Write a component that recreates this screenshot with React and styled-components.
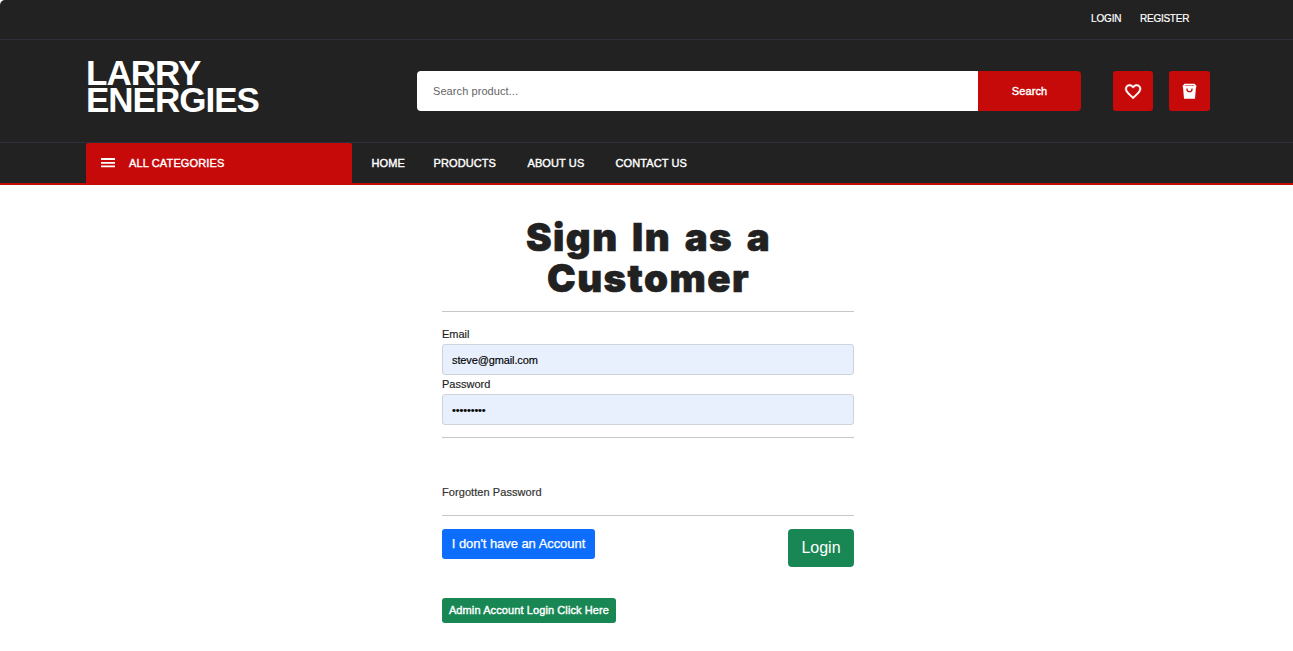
import React from 'react';
import styled, { createGlobalStyle, css } from 'styled-components';

const Global = createGlobalStyle`
  *, *::before, *::after { box-sizing: border-box; }
  body { margin: 0; background: #fff; color: #212121; font: 11px/16px "Liberation Sans", Arial, sans-serif; overflow: hidden; }
  a { color: inherit; text-decoration: none; }
  button, input { font: inherit; margin: 0; }
`;
const medium = css`
  font-weight: 400;
  -webkit-text-stroke: 0.4px currentColor;
`;
const Header = styled.header`
  background: #222;
  border-bottom: 2px solid #c60a0a;
  border-top-left-radius: 5px;
  color: #fff;
`;
const TopBar = styled.div`
  height: 40px;
  display: flex;
  justify-content: flex-end;
  gap: 19px;
  padding: 11px 103px 0 0;
  border-bottom: 1px solid #2f2e39;
  font-size: 10px;
  -webkit-text-stroke: 0.2px currentColor;
`;
const TopLink = styled.a`
  width: ${p => p.$w}px;
  white-space: nowrap;
  letter-spacing: ${p => p.$ls || 0}px;
`;
const MainBar = styled.div`
  height: 103px;
  display: flex;
  align-items: flex-start;
  padding: 0 83px 0 86px;
  border-bottom: 1px solid #2f2e39;
`;
const Logo = styled.h1`
  margin: 19px 0 0;
  width: 331px;
  font-size: 35px;
  line-height: 27px;
  font-weight: 700;
  letter-spacing: -1px;
`;
const SearchForm = styled.form`
  margin-top: 31px;
  display: flex;
  width: 664px;
  height: 40px;
  border-radius: 4px;
  overflow: hidden;
`;
const SearchInput = styled.input`
  flex: 1;
  min-width: 0;
  border: 0;
  padding: 0 16px;
  background: #fff;
  letter-spacing: 0.08px;
  &::placeholder { color: #646464; opacity: 1; }
`;
const SearchButton = styled.button`
  width: 103px;
  border: 0;
  background: #c60a0a;
  color: #fff;
  padding: 0;
  letter-spacing: 0.1px;
  ${medium}
`;
const IconButton = styled.button`
  margin: 31px 0 0 ${p => p.$gap}px;
  width: ${p => p.$w}px;
  height: 40px;
  border: 0;
  border-radius: 3px;
  padding: 0;
  background: #c60a0a;
  color: #fff;
  display: flex;
  align-items: center;
  justify-content: center;
`;
const NavBar = styled.nav`
  height: 40px;
  display: flex;
  padding-left: 86px;
  ${medium}
`;
const Categories = styled.div`
  width: 266px;
  display: flex;
  align-items: center;
  gap: 14px;
  padding-left: 15px;
  background: #c60a0a;
  border-radius: 2px 2px 0 0;
  letter-spacing: 0.14px;
`;
const NavLinks = styled.div`
  display: flex;
  align-items: center;
  padding-left: 19.5px;
  letter-spacing: 0.1px;
`;
const NavLink = styled.a`
  width: ${p => p.$w}px;
  white-space: nowrap;
`;
const Panel = styled.main`
  width: 412px;
  margin-left: 442px;
  padding-top: 32px;
`;
const Title = styled.h2`
  margin: 0;
  padding-left: 1px;
  font: 900 38.5px/41px Inter, "Liberation Sans", sans-serif;
  text-align: center;
  letter-spacing: 1.4px;
  word-spacing: 4.5px;
  -webkit-text-stroke: 0.6px currentColor;
`;
const Rule = styled.hr`
  margin: ${p => p.$top}px 0 0;
  border: 0;
  height: 1px;
  background: #c7c7c7;
`;
const Label = styled.label`
  display: block;
  height: 16px;
  margin-top: ${p => p.$top}px;
  -webkit-text-stroke: 0.15px currentColor;
`;
const Field = styled.input`
  display: block;
  width: 100%;
  height: 31px;
  margin-top: 2px;
  padding: 0 9px;
  border: 1px solid #ced4da;
  border-radius: 3px;
  background: #e8f0fe;
  color: #000;
  letter-spacing: -0.12px;
  -webkit-text-stroke: 0.15px currentColor;
`;
const Forgot = styled.a`
  display: block;
  margin-top: 46px;
  color: #333;
  letter-spacing: 0.07px;
  -webkit-text-stroke: 0.2px currentColor;
`;
const Actions = styled.div`
  display: flex;
  justify-content: space-between;
  align-items: flex-start;
  margin-top: 13px;
`;
const Button = styled.button`
  width: ${p => p.$w}px;
  height: ${p => p.$h}px;
  padding: 0;
  border: 0;
  border-radius: ${p => p.$r || 3}px;
  background: ${p => p.$bg};
  color: #fff;
  font-size: ${p => p.$size}px;
  letter-spacing: ${p => p.$ls || 0}px;
  white-space: nowrap;
  -webkit-text-stroke: ${p => p.$stroke || 0}px currentColor;
`;
const AdminButton = styled(Button)`
  padding-bottom: 1px;
`;
const AdminRow = styled.div`
  margin-top: 31px;
  display: flex;
`;

const MenuIcon = () => (
  <svg width="14" height="10" viewBox="0 0 14 10" fill="#fff">
    <path d="M0 0h14v2H0zM0 4h14v1.8H0zM0 7.4h14v1.8H0z" />
  </svg>
);
const HeartIcon = () => (
  <svg width="19" height="19" viewBox="0.5 0 24 24" fill="currentColor">
    <path d="M16.5 3c-1.74 0-3.41.81-4.5 2.09C10.91 3.81 9.24 3 7.5 3 4.42 3 2 5.42 2 8.5c0 3.78 3.4 6.86 8.55 11.54L12 21.35l1.45-1.32C18.6 15.36 22 12.28 22 8.5 22 5.42 19.58 3 16.5 3zm-4.4 15.55-.1.1-.1-.1C7.14 14.24 4 11.39 4 8.5 4 6.5 5.5 5 7.5 5c1.54 0 3.04.99 3.57 2.36h1.87C13.46 5.99 14.96 5 16.5 5c2 0 3.5 1.5 3.5 3.5 0 2.89-3.14 5.74-7.9 10.05z" stroke="currentColor" strokeWidth=".6" />
  </svg>
);
const BagIcon = () => (
  <svg width="15" height="16" viewBox="0 0 15 16">
    <path d="M2.5 .7h10l2 2.3-.6 2-.9 10.7H2L1.1 5 .5 3z" fill="#fff" />
    <path d="M3.2 1.9h8.6l.8 1.1H2.4z" fill="#e08080" />
    <path d="M5 5.6v.6a2.5 2.5 0 0 0 5 0v-.6" fill="none" stroke="#c60a0a" strokeWidth="1.3" />
  </svg>
);

export default function App() {
  return (
    <>
      <Global />
      <Header>
        <TopBar>
          <TopLink href="#" $w={30} $ls={-0.15}>LOGIN</TopLink>
          <TopLink href="#" $w={50} $ls={-0.25}>REGISTER</TopLink>
        </TopBar>
        <MainBar>
          <Logo>LARRY<br />ENERGIES</Logo>
          <SearchForm>
            <SearchInput placeholder="Search product..." />
            <SearchButton type="button">Search</SearchButton>
          </SearchForm>
          <IconButton $gap={32} $w={40} aria-label="Wishlist"><HeartIcon /></IconButton>
          <IconButton $gap={16} $w={41} aria-label="Cart"><BagIcon /></IconButton>
        </MainBar>
        <NavBar>
          <Categories><MenuIcon />ALL CATEGORIES</Categories>
          <NavLinks>
            <NavLink href="#" $w={62}>HOME</NavLink>
            <NavLink href="#" $w={94}>PRODUCTS</NavLink>
            <NavLink href="#" $w={88}>ABOUT US</NavLink>
            <NavLink href="#" $w={80}>CONTACT US</NavLink>
          </NavLinks>
        </NavBar>
      </Header>
      <Panel>
        <Title>Sign In as a<br />Customer</Title>
        <Rule $top={12} />
        <Label $top={14} htmlFor="email">Email</Label>
        <Field id="email" type="text" defaultValue="steve@gmail.com" />
        <Label $top={1} htmlFor="password">Password</Label>
        <Field id="password" type="password" defaultValue="customer1" />
        <Rule $top={12} />
        <Forgot href="#">Forgotten Password</Forgot>
        <Rule $top={15} />
        <Actions>
          <Button $w={153} $h={30} $bg="#0d6efd" $size={13} $ls={-0.06} $stroke={0.25}>I don't have an Account</Button>
          <Button $w={66} $h={38} $r={4} $bg="#198754" $size={16}>Login</Button>
        </Actions>
        <AdminRow>
          <AdminButton $w={174} $h={25} $bg="#198754" $size={11} $ls={0.1} $stroke={0.4}>Admin Account Login Click Here</AdminButton>
        </AdminRow>
      </Panel>
    </>
  );
}
